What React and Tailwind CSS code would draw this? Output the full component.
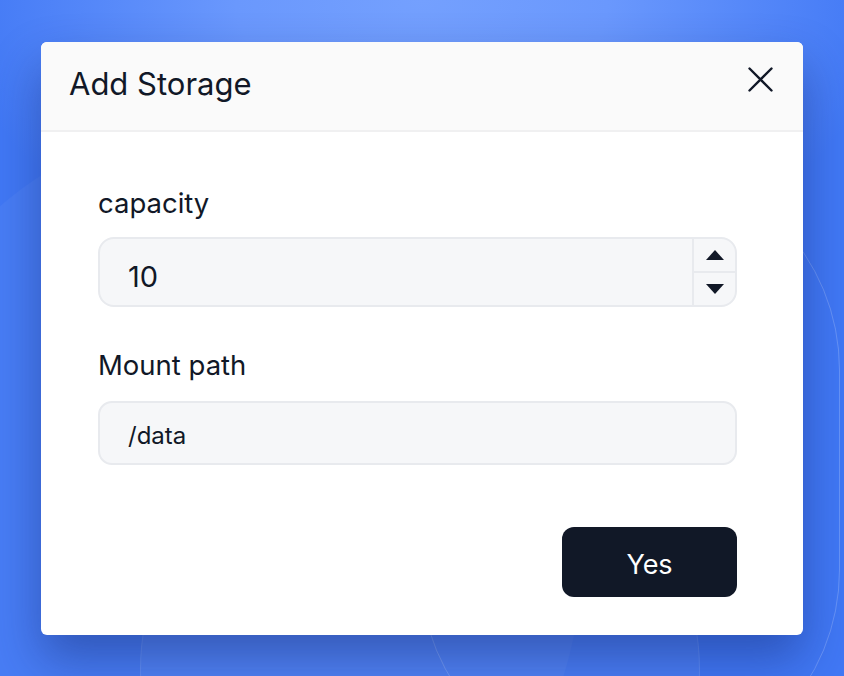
import React from "react";

export default function App() {
  return (
    <div
      className="relative w-[844px] h-[676px] overflow-hidden flex items-center justify-center bg-[#4178f5]"
      style={{ fontFamily: "Inter, 'Noto Sans', sans-serif" }}
    >
      <div className="absolute inset-0 bg-[radial-gradient(ellipse_55%_45%_at_50%_0%,#74a0fe_0%,#6a98fd_40%,rgba(70,125,246,0)_100%)]" />
      <div className="absolute left-[-120px] top-[120px] w-[700px] h-[800px] rounded-full bg-white/[0.04]" />
      <div className="absolute left-[420px] top-[160px] w-[420px] h-[620px] rounded-full border border-white/20" />
      <div className="absolute left-[140px] top-[420px] w-[560px] h-[500px] rounded-full border border-white/10 bg-white/[0.05]" />

      <div className="relative w-[762px] h-[593px] bg-white rounded-[6px] shadow-[0_24px_48px_rgba(20,40,110,0.45)] flex flex-col overflow-hidden">
        <div className="h-[90px] bg-[#fafafa] border-b-2 border-[#f0f0f1] flex items-center justify-between pl-[28px] pr-[30px] shrink-0">
          <h2 className="text-[31px] leading-none text-[#111827] mt-[-4px]">Add Storage</h2>
          <button className="w-[26px] h-[26px] flex items-center justify-center mt-[-12px]">
            <svg width="25" height="25" viewBox="0 0 25 25" fill="none" stroke="#111827" strokeWidth="2.4" strokeLinecap="round">
              <path d="M1.5 1.5 L23.5 23.5 M23.5 1.5 L1.5 23.5" />
            </svg>
          </button>
        </div>

        <div className="flex flex-col pl-[57px] pr-[66px] pt-[58px]">
          <label className="text-[27.5px] leading-none text-[#111827] mb-[20px]">capacity</label>
          <div className="h-[70px] rounded-[16px] border-2 border-[#e8eaee] bg-[#f6f7f9] flex items-stretch overflow-hidden">
            <div className="flex-1 flex items-center pl-[28px] pt-[10px] text-[29px] text-[#111827]">10</div>
            <div className="w-[43px] border-l-2 border-[#e8eaee] flex flex-col">
              <div className="flex-1 flex items-center justify-center border-b-2 border-[#e8eaee]">
                <svg width="18" height="10" viewBox="0 0 18 10"><path d="M9 0 L18 10 L0 10 Z" fill="#111827" /></svg>
              </div>
              <div className="flex-1 flex items-center justify-center">
                <svg width="18" height="10" viewBox="0 0 18 10"><path d="M0 0 L18 0 L9 10 Z" fill="#111827" /></svg>
              </div>
            </div>
          </div>

          <label className="text-[27.5px] leading-none text-[#111827] mt-[45px] mb-[21px]">Mount path</label>
          <div className="h-[64px] rounded-[14px] border-2 border-[#e8eaee] bg-[#f6f7f9] flex items-center pl-[28px] pt-[6px] text-[24px] text-[#111827]">
            /data
          </div>

          <div className="flex justify-end mt-[62px]">
            <button className="w-[175px] h-[70px] rounded-[12px] bg-[#111827] text-white text-[27px] pt-[8px] flex items-center justify-center">
              Yes
            </button>
          </div>
        </div>
      </div>
    </div>
  );
}
